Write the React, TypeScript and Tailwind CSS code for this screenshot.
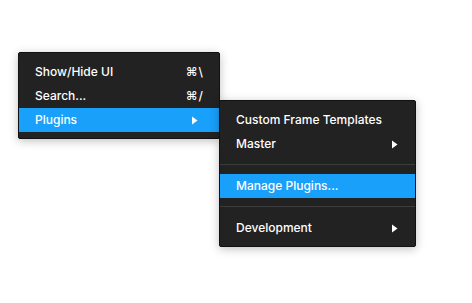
const font = { fontFamily: "Inter, 'Noto Sans', sans-serif" };

type Item =
  | { kind: "item"; label: string; shortcut?: string; submenu?: boolean; active?: boolean }
  | { kind: "sep" };

const mainMenu: Item[] = [
  { kind: "item", label: "Show/Hide UI", shortcut: "⌘\\" },
  { kind: "item", label: "Search...", shortcut: "⌘/" },
  { kind: "item", label: "Plugins", submenu: true, active: true },
];

const pluginsMenu: Item[] = [
  { kind: "item", label: "Custom Frame Templates" },
  { kind: "item", label: "Master", submenu: true },
  { kind: "sep" },
  { kind: "item", label: "Manage Plugins...", active: true },
  { kind: "sep" },
  { kind: "item", label: "Development", submenu: true },
];

function Caret({ className }: { className: string }) {
  return (
    <svg width="6" height="9" viewBox="0 0 6 9" className={className}>
      <path d="M0 0.5 L5.5 4.5 L0 8.5 Z" fill="white" />
    </svg>
  );
}

function Menu({
  items,
  className,
  caretClass,
}: {
  items: Item[];
  className: string;
  caretClass: string;
}) {
  return (
    <div
      className={`${className} bg-[#222222] border border-[#111111] rounded-[2px] pt-[7px] pb-[6px] shadow-[0_2px_10px_rgba(0,0,0,0.25)]`}
    >
      {items.map((item, i) =>
        item.kind === "sep" ? (
          <div key={i} className="pt-[8px] pb-[9px]">
            <div className="h-px bg-[#3c3c3c]" />
          </div>
        ) : (
          <div
            key={i}
            className={`flex h-[24px] items-center justify-between pl-[16px] pr-[15px] text-[12px] font-medium text-white ${
              item.active ? "bg-[#18a0fb]" : ""
            }`}
          >
            <span>{item.label}</span>
            {item.shortcut && <span className="tracking-[1px]">{item.shortcut}</span>}
            {item.submenu && <Caret className={caretClass} />}
          </div>
        )
      )}
    </div>
  );
}

export default function App() {
  return (
    <div className="w-[472px] h-[303px] bg-white overflow-hidden" style={font}>
      <div className="flex items-start pt-[52px] pl-[18px]">
        <Menu items={mainMenu} className="w-[202px] relative z-0" caretClass="mr-[6px]" />
        <Menu
          items={pluginsMenu}
          className="w-[197px] mt-[48px] -ml-px relative z-10"
          caretClass="mr-[2px]"
        />
      </div>
    </div>
  );
}
